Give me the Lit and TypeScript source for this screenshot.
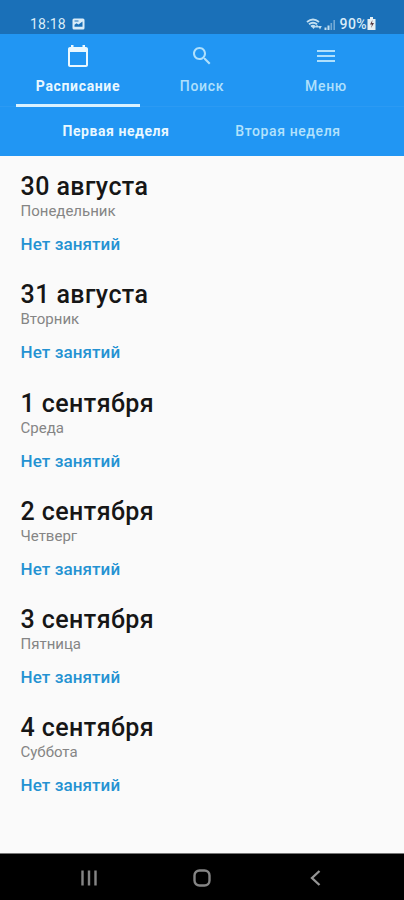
import { LitElement, html, css, svg } from "lit";
import { customElement } from "lit/decorators.js";
import { classMap } from "lit/directives/class-map.js";

const days = [
  ["30 августа", "Понедельник"],
  ["31 августа", "Вторник"],
  ["1 сентября", "Среда"],
  ["2 сентября", "Четверг"],
  ["3 сентября", "Пятница"],
  ["4 сентября", "Суббота"],
];

const calendar = svg`<path fill="currentColor" d="M20 3h-1V1h-2.500v2h-9V1H5v2H4c-1.100 0-2 .9-2 2v16c0 1.100.9 2 2 2h16c1.100 0 2-.9 2-2V5c0-1.100-.9-2-2-2zm0 18H4V8h16v13z"/>`;
const search = svg`<path fill="currentColor" d="M15.5 14h-.79l-.28-.27C15.41 12.59 16 11.11 16 9.5 16 5.91 13.09 3 9.5 3S3 5.91 3 9.5 5.91 16 9.5 16c1.61 0 3.09-.59 4.23-1.57l.27.28v.79l5 4.99L20.49 19l-4.99-5zm-6 0C7.01 14 5 11.99 5 9.5S7.01 5 9.5 5 14 7.01 14 9.5 11.99 14 9.5 14z"/>`;
const menu = svg`<path fill="currentColor" d="M3 18h18v-2H3v2zm0-5h18v-2H3v2zm0-7v2h18V6H3z"/>`;

const tabs = [
  { label: "Расписание", icon: calendar, active: true },
  { label: "Поиск", icon: search, active: false },
  { label: "Меню", icon: menu, active: false },
];

@customElement("app-root")
export class AppRoot extends LitElement {
  static styles = css`
    :host {
      display: flex;
      flex-direction: column;
      height: 900px;
      overflow: hidden;
      background: #fafafa;
      font-family: Roboto, "Noto Sans", sans-serif;
    }
    svg { display: block; }
    .status {
      flex: none;
      box-sizing: border-box;
      height: 34px;
      padding: 13px 28px 0 30px;
      display: flex;
      justify-content: space-between;
      background: #1a70b8;
      color: #d9ecf8;
      font-size: 14px;
      line-height: 20px;
    }
    .group { display: flex; align-items: center; }
    .clock { letter-spacing: 0.2px; }
    .photo { margin-left: 6px; }
    .percent { margin-left: 4px; letter-spacing: 0.4px; font-weight: 500; }
    .tabs {
      flex: none;
      box-sizing: border-box;
      height: 73px;
      padding: 0 16px;
      display: flex;
      background: #2196f3;
      border-bottom: 1px solid #2b9af3;
    }
    .tab {
      flex: 1;
      box-sizing: border-box;
      height: 73px;
      padding-top: 10px;
      display: flex;
      flex-direction: column;
      align-items: center;
      color: #afe0fc;
      border-bottom: 3px solid transparent;
      font-size: 14px;
      font-weight: 500;
      line-height: 20px;
      letter-spacing: 0.7px;
    }
    .tab.active {
      color: #e9f8ff;
      border-bottom-color: #d9f2ff;
      font-weight: 700;
      letter-spacing: 0.65px;
    }
    .caption { margin-top: 8px; }
    .weeks {
      flex: none;
      box-sizing: border-box;
      height: 49px;
      padding: 0 30px;
      display: flex;
      background: #2196f3;
      font-size: 14px;
      line-height: 49px;
      font-weight: 500;
      letter-spacing: 0.6px;
      color: #b3e2fc;
    }
    .week { flex: 1; text-align: center; }
    .week.active { color: #e9f8ff; font-weight: 700; letter-spacing: 0.55px; }
    .list { flex: 1; padding: 14px 20px 0 20.5px; }
    .day { height: 108.25px; }
    .date {
      padding-top: 1px;
      font-size: 25px;
      line-height: 32px;
      font-weight: 500;
      letter-spacing: 0.43px;
      color: #161616;
    }
    .name {
      margin-top: -1px;
      font-size: 15px;
      line-height: 18px;
      color: #858585;
    }
    .empty {
      margin-top: 14px;
      font-size: 17px;
      line-height: 20px;
      font-weight: 500;
      letter-spacing: 0.1px;
      color: #2492d2;
    }
    .nav {
      flex: none;
      box-sizing: border-box;
      height: 47px;
      padding: 2px 32px 0;
      display: flex;
      align-items: center;
      background: #000;
      border-top: 1px solid #777;
    }
    .key { flex: 1; display: flex; justify-content: center; }
  `;

  render() {
    return html`
      <div class="status">
        <div class="group">
          <span class="clock">18:18</span>
          <svg class="photo" width="13" height="12" viewBox="0 0 13 12">
            <rect x=".5" y=".5" width="12" height="11" rx="1.5" fill="#d9ecf8" />
            <path d="M2.5 8.8V6.7l2-1.5 2 1.4 4-3v5.2z" fill="#1a70b8" />
            <path d="M2.5 3h4" stroke="#1a70b8" />
          </svg>
        </div>
        <div class="group">
          <svg width="30" height="14" viewBox="0 0 30 14">
            <path d="M1 5Q7 0 13 5M3 7.3Q7 4 11 7.3M5 9.5Q7 8 9 9.5" fill="none" stroke="#c3dff0" stroke-width="1.9" />
            <path d="M7.500 12L5 9h5zM11 7.500l2 3h-4zM14 12.500l-1.800-3.500h3.600z" fill="#c3dff0" />
            <path d="M19.5 13v-2.5M22.5 13V8.5" stroke="#c3dff0" stroke-width="2" />
            <path d="M25.3 13V6M28.2 13V3" stroke="#73a9d5" stroke-width="1.6" />
          </svg>
          <span class="percent">90%</span>
          <svg width="9" height="13" viewBox="0 0 9 13">
            <path d="M3 0h3v2h2.5v11H.5V2H3z" fill="#e5eff3" />
            <path d="M5.5 3L3 7.5h2L4 11l3-5H5z" fill="#573b43" />
          </svg>
        </div>
      </div>
      <div class="tabs">
        ${tabs.map(
          (t) => html`<div class=${classMap({ tab: true, active: t.active })}>
            <svg width="24" height="24" viewBox="0 0 24 24">${t.icon}</svg>
            <span class="caption">${t.label}</span>
          </div>`
        )}
      </div>
      <div class="weeks">
        <div class="week active">Первая неделя</div>
        <div class="week">Вторая неделя</div>
      </div>
      <div class="list">
        ${days.map(
          ([date, name]) => html`<div class="day">
            <div class="date">${date}</div>
            <div class="name">${name}</div>
            <div class="empty">Нет занятий</div>
          </div>`
        )}
      </div>
      <div class="nav">
        <div class="key">
          <svg width="18" height="18" viewBox="0 0 18 18">
            <path d="M2.5 1.5v15M9 1.5v15M15.5 1.5v15" stroke="#858585" stroke-width="2.4" />
          </svg>
        </div>
        <div class="key">
          <svg width="18" height="18" viewBox="0 0 18 18">
            <rect x="1.5" y="1.5" width="15" height="15" rx="5" fill="none" stroke="#858585" stroke-width="2.4" />
          </svg>
        </div>
        <div class="key">
          <svg width="18" height="18" viewBox="0 0 18 18">
            <path d="M13.500 2L6 9l7.500 7" fill="none" stroke="#959595" stroke-width="2.300" />
          </svg>
        </div>
      </div>
    `;
  }
}
